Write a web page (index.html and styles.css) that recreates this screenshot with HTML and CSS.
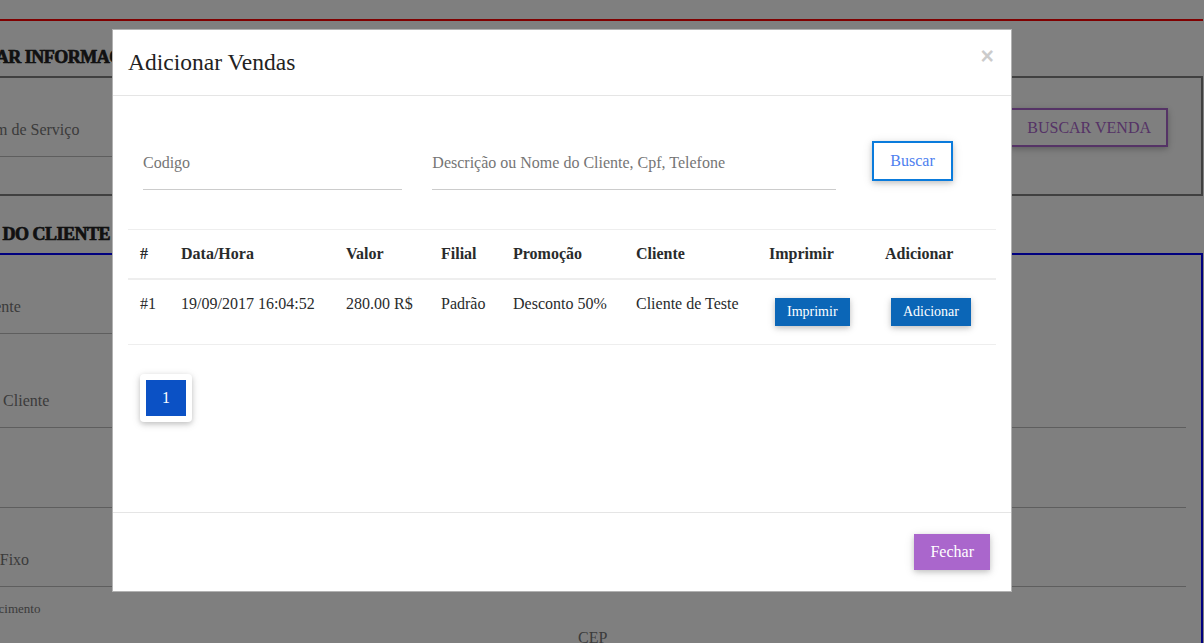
FILE: index.html
```html
<!doctype html>
<html lang="pt-BR">
  <head>
    <meta charset="utf-8">
    <title>Adicionar Vendas</title>
    <link rel="stylesheet" href="styles.css">
  </head>
  <body>
    <!-- pagina por tras do modal -->
    <div class="page">
      <div class="topbar"></div>

      <h2 class="section-title">ALTERAR INFORMAÇÕES</h2>
      <div class="search-box">
        <div class="field field-os"><label>Ordem de Serviço</label></div>
        <button class="btn-outline">Buscar Venda</button>
      </div>

      <h2 class="section-title client-title">DADOS DO CLIENTE</h2>
      <div class="client-box">
        <div class="client-grid">
          <div class="field"><label>Cód. Cliente</label></div>
          <div></div>
          <div class="field"><label>Nome do Cliente</label></div>
          <div class="field"><label>Email</label></div>
          <div class="field"><label></label></div>
          <div class="field"><label></label></div>
          <div class="field"><label>Telefone Fixo</label></div>
          <div class="field"><label>Celular</label></div>
          <div class="field field-top"><label class="small">Data de Nascimento</label></div>
          <div class="field field-top"><label class="cep">CEP</label></div>
        </div>
      </div>
    </div>

    <div class="backdrop"></div>

    <div class="modal">
      <div class="modal-dialog">
        <div class="modal-content">
          <div class="modal-header">
            <h4 class="modal-title">Adicionar Vendas</h4>
            <button class="close" type="button">&times;</button>
          </div>

          <div class="modal-body">
            <div class="search-row">
              <div class="search-col"><input type="text" placeholder="Codigo"></div>
              <div class="search-col"><input type="text" placeholder="Descrição ou Nome do Cliente, Cpf, Telefone"></div>
              <div class="search-col"><button class="btn-buscar" type="button">Buscar</button></div>
            </div>

            <table class="sales">
              <thead>
                <tr>
                  <th class="c-num">#</th>
                  <th class="c-data">Data/Hora</th>
                  <th class="c-valor">Valor</th>
                  <th class="c-filial">Filial</th>
                  <th class="c-promo">Promoção</th>
                  <th class="c-cliente">Cliente</th>
                  <th class="c-imprimir">Imprimir</th>
                  <th class="c-adicionar">Adicionar</th>
                </tr>
              </thead>
              <tbody>
                <tr>
                  <td>#1</td>
                  <td>19/09/2017 16:04:52</td>
                  <td>280.00 R$</td>
                  <td>Padrão</td>
                  <td>Desconto 50%</td>
                  <td>Cliente de Teste</td>
                  <td><button class="btn-sm" type="button">Imprimir</button></td>
                  <td><button class="btn-sm" type="button">Adicionar</button></td>
                </tr>
              </tbody>
            </table>

            <div class="pager">
              <span class="page-num">1</span>
            </div>
          </div>

          <div class="modal-footer">
            <button class="btn-fechar" type="button">Fechar</button>
          </div>
        </div>
      </div>
    </div>
  </body>
</html>
```

FILE: styles.css
```css
html, body {
  margin: 0;
  padding: 0;
  overflow: hidden;
}

body {
  font-family: "Liberation Serif", "Times New Roman", serif;
  font-size: 16px;
  color: #292b2c;
  background: #fff;
}

button {
  font-family: inherit;
  cursor: pointer;
}

/* ---- page behind ---- */

.page {
  margin: 0 1px 0 -62px;
}

.topbar {
  height: 19px;
  border-bottom: 2px solid #ff0000;
}

.section-title {
  margin: 24px 0 7px;
  font-size: 18px;
  line-height: 24px;
  font-weight: bold;
  letter-spacing: -0.5px;
  color: #222;
  -webkit-text-stroke: 0.7px #222;
}

.client-title {
  margin-top: 26px;
}

.search-box {
  height: 120px;
  box-sizing: border-box;
  border: 2px solid #808080;
  padding: 0 33px 0 23px;
  display: flex;
  justify-content: space-between;
  align-items: flex-start;
}

.field {
  border-bottom: 1px solid #bdbdbd;
  display: flex;
  align-items: flex-end;
}

.field label {
  display: block;
  line-height: 20px;
  padding-bottom: 16px;
  color: #777;
}

.field-os {
  width: 560px;
  margin-top: 42px;
}

.btn-outline {
  margin-top: 30px;
  background: #fff;
  border: 2px solid #aa66cc;
  color: #aa66cc;
  font-size: 16px;
  line-height: 23px;
  padding: 6px 15px;
  text-transform: uppercase;
  box-shadow: 0 2px 5px rgba(0, 0, 0, 0.16), 0 2px 10px rgba(0, 0, 0, 0.12);
}

.client-box {
  border: 2px solid #0000ff;
  padding: 0 15px 40px 0;
}

.client-grid {
  display: grid;
  grid-template-columns: 1fr 1fr;
  grid-template-rows: 79px 94px 80px 79px 80px;
  column-gap: 30px;
}

.field-top {
  border-bottom: 0;
  align-items: flex-start;
}

.field-top .small {
  font-size: 13px;
  line-height: 16px;
  margin: 14px 0 0 -5px;
  padding: 0;
}

.field-top .cep {
  margin-top: 41px;
  padding: 0;
}

/* ---- modal ---- */

.backdrop {
  position: fixed;
  inset: 0;
  background: rgba(0, 0, 0, 0.5);
}

.modal {
  position: fixed;
  inset: 0;
  overflow: hidden;
}

.modal-dialog {
  width: 900px;
  margin: 29px 0 0 112px;
}

.modal-content {
  background: #fff;
  border: 1px solid rgba(0, 0, 0, 0.3);
}

.modal-header {
  padding: 15px;
  border-bottom: 1px solid #e5e5e5;
  display: flex;
  justify-content: space-between;
  align-items: flex-start;
}

.modal-title {
  margin: 0;
  font-size: 23.5px;
  line-height: 35px;
  font-weight: normal;
  color: #222;
}

.close {
  margin: 0 2px 0 0;
  padding: 0;
  background: none;
  border: 0;
  font-family: "Liberation Sans", Arial, sans-serif;
  font-size: 23px;
  font-weight: bold;
  line-height: 1;
  color: #000;
  opacity: 0.2;
}

.modal-body {
  padding: 15px;
}

.search-row {
  display: grid;
  grid-template-columns: 4fr 6fr 2fr;
  margin-top: 24px;
}

.search-col {
  padding: 0 15px;
}

.search-col input {
  display: block;
  width: 100%;
  height: 48px;
  margin-top: 7px;
  box-sizing: border-box;
  padding: 0 0 5px;
  border: 0;
  border-bottom: 1px solid #ccc;
  background: transparent;
  outline: none;
  font-family: inherit;
  font-size: 16px;
  color: #333;
}

.search-col input::placeholder {
  color: #757575;
}

.btn-buscar {
  margin: 6px;
  padding: 6px 16px;
  line-height: 24px;
  font-size: 16px;
  background: #fff;
  color: #4d80ef;
  border: 2px solid #0a7bdc;
  box-shadow: 0 2px 5px rgba(0, 0, 0, 0.16), 0 2px 10px rgba(0, 0, 0, 0.12);
}

.sales {
  width: 100%;
  margin-top: 39px;
  border-collapse: collapse;
  table-layout: fixed;
  border-top: 1px solid #eee;
}

.sales th,
.sales td {
  padding: 12px;
  line-height: 24px;
  text-align: left;
  white-space: nowrap;
}

.sales th {
  font-weight: bold;
  border-bottom: 2px solid #eee;
  vertical-align: bottom;
  box-sizing: border-box;
}

.sales td {
  border-bottom: 1px solid #eee;
  vertical-align: top;
}

.c-num { width: 41px; }
.c-data { width: 165px; }
.c-valor { width: 95px; }
.c-filial { width: 72px; }
.c-promo { width: 123px; }
.c-cliente { width: 133px; }
.c-imprimir { width: 116px; }
.c-adicionar { width: 123px; }

.btn-sm {
  display: inline-block;
  vertical-align: top;
  margin: 6px;
  padding: 4px 12px;
  line-height: 20px;
  font-size: 14px;
  color: #fff;
  background: #0b66b7;
  border: 0;
  box-shadow: 0 2px 5px rgba(0, 0, 0, 0.16), 0 2px 10px rgba(0, 0, 0, 0.12);
}

.pager {
  display: flex;
  width: fit-content;
  margin: 29px 0 75px 12px;
  padding: 6px;
  border-radius: 4px;
  background: #fff;
  box-shadow: 0 2px 5px rgba(0, 0, 0, 0.16), 0 2px 10px rgba(0, 0, 0, 0.12);
}

.page-num {
  display: block;
  width: 40px;
  height: 36px;
  line-height: 36px;
  text-align: center;
  color: #fff;
  background: #0b51c5;
}

.modal-footer {
  padding: 15px;
  border-top: 1px solid #e5e5e5;
  display: flex;
  justify-content: flex-end;
}

.btn-fechar {
  margin: 6px;
  padding: 6px 16px;
  line-height: 24px;
  font-size: 16px;
  color: #fff;
  background: #aa66cc;
  border: 0;
  box-shadow: 0 2px 5px rgba(0, 0, 0, 0.16), 0 2px 10px rgba(0, 0, 0, 0.12);
}
```
